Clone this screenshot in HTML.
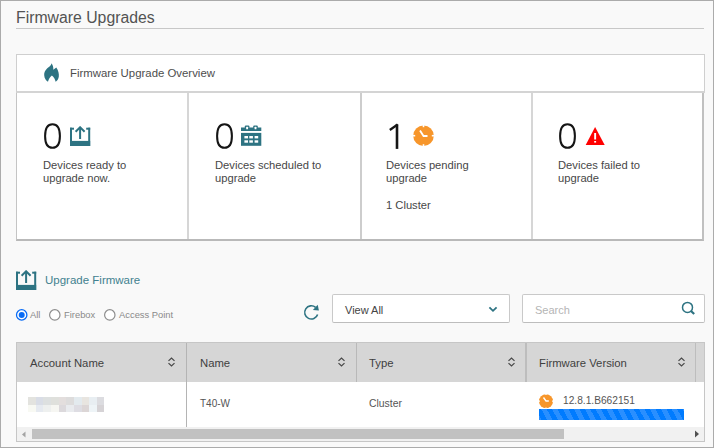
<!DOCTYPE html>
<html><head><meta charset="utf-8">
<style>
*{box-sizing:border-box;margin:0;padding:0}
html,body{width:714px;height:448px;overflow:hidden;background:#fff}
body{font-family:"Liberation Sans",sans-serif;position:relative}
.abs{position:absolute}
#frame{left:0;top:0;width:714px;height:448px;border:1px solid #ababab;background:#f9f9f9}
.t{position:absolute;white-space:nowrap;line-height:1}
#title{left:16px;top:10px;font-size:15.8px;color:#535353}
#tline{left:16px;top:28px;width:688px;height:1px;background:#c8c8c8}
#ovh{left:16px;top:54px;width:689px;height:39px;background:#fff;border:1px solid #cfcfcf;border-bottom:2px solid #d4d4d4}
#cards{left:16px;top:93px;width:688px;height:148px;background:#fff;border:1px solid #c4c4c4;border-top:none;border-bottom:2px solid #b9b9b9;border-right:2px solid #c0c0c0}
.vd{position:absolute;top:93px;width:2px;height:146px;background:#d6d6d6}
.num{position:absolute;font-size:35px;color:#1e1e1e;line-height:1;top:120px;font-weight:normal;transform:scaleX(0.85);transform-origin:0 0}
.desc{position:absolute;font-size:11.2px;color:#474747;line-height:13px;white-space:nowrap}
.teal{fill:#2d7382}
.th{top:358px;font-size:11.3px;color:#3f3f3f}
.td{font-size:10px;color:#555}
.sort polyline{fill:none;stroke:#484848;stroke-width:1.25}
#blur i{display:block}
</style></head><body>
<div id="frame" class="abs"></div>
<div id="title" class="t">Firmware Upgrades</div>
<div id="tline" class="abs"></div>

<div id="ovh" class="abs"></div>
<svg class="abs" style="left:44px;top:63px" width="16" height="20" viewBox="0 0 16 20">
 <path class="teal" d="M7.4,0.3 C8.6,1.8 9.6,3.8 9.3,6.8 L12.3,4.4 C14.4,7.4 15.2,10.8 14.8,13.8 C14.4,16.4 13,18.2 11.6,18.8 C11.2,16.2 9.8,13.6 7.9,12.4 C6,13.6 4.5,16.2 4,18.8 C2,17.8 0.4,15.4 0.2,12.2 C0,8.4 2.6,5.6 5.2,3.8 C6.6,2.8 7.4,1.6 7.4,0.3 Z"/>
</svg>
<div class="t" style="left:70px;top:68px;font-size:11.4px;color:#4d4d4d">Firmware Upgrade Overview</div>

<div id="cards" class="abs"></div>
<div class="vd" style="left:187px"></div>
<div class="vd" style="left:360px;background:#cdcdcd"></div>
<div class="vd" style="left:531px"></div>

<!-- card 1 -->
<svg class="abs" style="left:44px;top:123px" width="18" height="27" viewBox="0 0 18 27"><path d="M8.5,1.15 C14.1,1.15 15.9,6.2 15.9,12.95 C15.9,19.7 14.1,24.8 8.5,24.8 C2.9,24.8 1.1,19.7 1.1,12.95 C1.1,6.2 2.9,1.15 8.5,1.15 Z" fill="none" stroke="#151515" stroke-width="2.05"/></svg>
<svg class="abs" style="left:70px;top:125.6px" width="22" height="21" viewBox="0 0 22 21">
 <g class="teal">
  <rect x="0" y="1.7" width="2" height="18.3"/>
  <rect x="18.2" y="1.7" width="2" height="18.3"/>
  <rect x="0" y="1.7" width="4" height="2"/>
  <rect x="16.2" y="1.7" width="4" height="2"/>
  <rect x="0" y="14.9" width="20.2" height="5.1"/>
  <rect x="9.1" y="1.5" width="2" height="11.5"/>
 </g>
 <polyline points="5.6,5.8 10.1,1.3 14.6,5.8" fill="none" stroke="#2d7382" stroke-width="2"/>
</svg>
<div class="desc" style="left:43px;top:159px">Devices ready to<br>upgrade now.</div>

<!-- card 2 -->
<svg class="abs" style="left:216px;top:123px" width="18" height="27" viewBox="0 0 18 27"><path d="M8.5,1.15 C14.1,1.15 15.9,6.2 15.9,12.95 C15.9,19.7 14.1,24.8 8.5,24.8 C2.9,24.8 1.1,19.7 1.1,12.95 C1.1,6.2 2.9,1.15 8.5,1.15 Z" fill="none" stroke="#151515" stroke-width="2.05"/></svg>
<svg class="abs" style="left:241px;top:125px" width="21" height="21" viewBox="0 0 21 21">
 <g class="teal">
  <rect x="0" y="2.5" width="20.3" height="3.5"/>
  <rect x="3.8" y="0.6" width="4.6" height="3.2" rx="1"/>
  <rect x="12.2" y="0.6" width="4.6" height="3.2" rx="1"/>
  <rect x="0" y="7.9" width="20.3" height="12.9"/>
 </g>
 <g fill="#fff">
  <rect x="5.15" y="1.8" width="1.9" height="2.5" rx="0.5"/>
  <rect x="13.55" y="1.8" width="1.9" height="2.5" rx="0.5"/>
  <rect x="3.4" y="11" width="3.6" height="2.4"/>
  <rect x="8.3" y="11" width="3.6" height="2.4"/>
  <rect x="13.6" y="11" width="3.6" height="2.4"/>
  <rect x="3.4" y="15.3" width="3.6" height="2.4"/>
  <rect x="8.3" y="15.3" width="3.6" height="2.4"/>
  <rect x="13.6" y="15.3" width="3.6" height="2.4"/>
 </g>
</svg>
<div class="desc" style="left:215px;top:159px">Devices scheduled to<br>upgrade</div>

<!-- card 3 -->
<svg class="abs" style="left:388px;top:123px" width="12" height="27" viewBox="0 0 12 27"><path d="M9,1.3 L9,25.9" fill="none" stroke="#151515" stroke-width="2.6"/><path d="M9.6,1.5 L1.8,7" fill="none" stroke="#151515" stroke-width="2.2"/></svg>
<svg class="abs" style="left:413px;top:125px" width="22" height="22" viewBox="0 0 22 22">
 <circle cx="10.5" cy="10.7" r="10.3" fill="#f7962b"/>
 <g stroke="#fff" stroke-width="1.6">
  <line x1="10.5" y1="0" x2="10.5" y2="2.2"/>
  <line x1="10.5" y1="19.2" x2="10.5" y2="21.5"/>
  <line x1="0" y1="10.7" x2="2.2" y2="10.7"/>
  <line x1="18.8" y1="10.7" x2="21" y2="10.7"/>
 </g>
 <polyline points="7,5.5 10.5,11 14.5,11" fill="none" stroke="#fff" stroke-width="1.8"/>
</svg>
<div class="desc" style="left:386px;top:159px">Devices pending<br>upgrade</div>
<div class="desc" style="left:386px;top:199px">1 Cluster</div>

<!-- card 4 -->
<svg class="abs" style="left:559px;top:123px" width="18" height="27" viewBox="0 0 18 27"><path d="M8.5,1.15 C14.1,1.15 15.9,6.2 15.9,12.95 C15.9,19.7 14.1,24.8 8.5,24.8 C2.9,24.8 1.1,19.7 1.1,12.95 C1.1,6.2 2.9,1.15 8.5,1.15 Z" fill="none" stroke="#151515" stroke-width="2.05"/></svg>
<svg class="abs" style="left:585px;top:126px" width="21" height="20" viewBox="0 0 21 20">
 <polygon points="10.1,1 19.7,19 0.7,19" fill="#ff0000"/>
 <rect x="9.2" y="7" width="1.9" height="6.5" fill="#fff"/>
 <rect x="9.2" y="15" width="1.9" height="1.6" fill="#fff"/>
</svg>
<div class="desc" style="left:558px;top:159px">Devices failed to<br>upgrade</div>

<!-- upgrade firmware -->
<svg class="abs" style="left:16px;top:270px" width="22" height="21" viewBox="0 0 22 21">
 <g class="teal">
  <rect x="0" y="1.7" width="2" height="18.3"/>
  <rect x="18.2" y="1.7" width="2" height="18.3"/>
  <rect x="0" y="1.7" width="4" height="2"/>
  <rect x="16.2" y="1.7" width="4" height="2"/>
  <rect x="0" y="14.9" width="20.2" height="5.1"/>
  <rect x="9.1" y="1.5" width="2" height="11.5"/>
 </g>
 <polyline points="5.6,5.8 10.1,1.3 14.6,5.8" fill="none" stroke="#2d7382" stroke-width="2"/>
</svg>
<div class="t" style="left:45px;top:275px;font-size:11.5px;color:#42818f">Upgrade Firmware</div>

<!-- radios -->
<svg class="abs" style="left:15px;top:308px" width="14" height="14" viewBox="0 0 14 14">
 <circle cx="6.7" cy="6.9" r="5.2" fill="#fff" stroke="#0a6cf5" stroke-width="1.3"/>
 <circle cx="6.7" cy="6.9" r="3" fill="#0a6cf5"/>
</svg>
<div class="t" style="left:30px;top:310px;font-size:9.4px;color:#8a8a8a">All</div>
<svg class="abs" style="left:48px;top:308px" width="14" height="14" viewBox="0 0 14 14">
 <circle cx="6.8" cy="6.9" r="5.2" fill="#fff" stroke="#8d8d8d" stroke-width="1.2"/>
</svg>
<div class="t" style="left:64px;top:310px;font-size:9.4px;color:#8a8a8a">Firebox</div>
<svg class="abs" style="left:103px;top:308px" width="14" height="14" viewBox="0 0 14 14">
 <circle cx="6.8" cy="6.9" r="5.2" fill="#fff" stroke="#8d8d8d" stroke-width="1.2"/>
</svg>
<div class="t" style="left:119px;top:310px;font-size:9.4px;color:#8a8a8a">Access Point</div>

<!-- refresh -->
<svg class="abs" style="left:303px;top:304px" width="17" height="17" viewBox="0 0 17 17">
 <path d="M14.6,10.4 A6.6,6.6 0 1 1 12.6,3.4" fill="none" stroke="#2d7382" stroke-width="1.6"/>
 <polygon points="14.7,0.7 15.9,6.4 9.9,5.9" fill="#2d7382"/>
</svg>
<!-- select -->
<div class="abs" style="left:332px;top:294px;width:178px;height:29px;background:#fff;border:1px solid #c9c9c9;border-radius:2px;border-bottom-color:#bdbdbd"></div>
<div class="t" style="left:345px;top:305px;font-size:11px;color:#444">View All</div>
<svg class="abs" style="left:488px;top:306px" width="11" height="7" viewBox="0 0 11 7">
 <polyline points="1.4,1.3 5,4.8 8.6,1.3" fill="none" stroke="#2d7382" stroke-width="1.8"/>
</svg>

<!-- search -->
<div class="abs" style="left:522px;top:294px;width:183px;height:29px;background:#fff;border:1px solid #c9c9c9;border-radius:2px;border-bottom-color:#bdbdbd"></div>
<div class="t" style="left:535px;top:305px;font-size:11px;color:#b5b5b5">Search</div>
<svg class="abs" style="left:680px;top:300px" width="16" height="16" viewBox="0 0 16 16">
 <circle cx="7.5" cy="7.4" r="5" fill="none" stroke="#2d7382" stroke-width="1.5"/>
 <line x1="11" y1="11" x2="14.2" y2="14" stroke="#2d7382" stroke-width="2.2"/>
</svg>

<!-- table -->
<div class="abs" style="left:16px;top:342px;width:689px;height:100px;background:#fff;border:1px solid #c6c6c6"></div>
<div class="abs" style="left:17px;top:343px;width:687px;height:39px;background:#d6d6d6"></div>

<!-- header cells -->
<div class="abs" style="left:186px;top:343px;width:1px;height:84px;background:#b4b4b4"></div>
<div class="abs" style="left:356px;top:343px;width:1px;height:39px;background:#b9b9b9"></div>
<div class="abs" style="left:525px;top:343px;width:2px;height:39px;background:#bdbdbd"></div>
<div class="abs" style="left:695px;top:343px;width:1px;height:39px;background:#bdbdbd"></div>
<div class="th t" style="left:30px">Account Name</div>
<div class="th t" style="left:200px">Name</div>
<div class="th t" style="left:369px">Type</div>
<div class="th t" style="left:539px">Firmware Version</div>
<svg class="abs sort" style="left:167px;top:357px" width="9" height="11" viewBox="0 0 9 11"><polyline points="1.5,3.9 4.5,1 7.5,3.9"/><polyline points="1.5,6.1 4.5,9 7.5,6.1"/></svg>
<svg class="abs sort" style="left:337px;top:357px" width="9" height="11" viewBox="0 0 9 11"><polyline points="1.5,3.9 4.5,1 7.5,3.9"/><polyline points="1.5,6.1 4.5,9 7.5,6.1"/></svg>
<svg class="abs sort" style="left:507px;top:357px" width="9" height="11" viewBox="0 0 9 11"><polyline points="1.5,3.9 4.5,1 7.5,3.9"/><polyline points="1.5,6.1 4.5,9 7.5,6.1"/></svg>
<svg class="abs sort" style="left:677px;top:357px" width="9" height="11" viewBox="0 0 9 11"><polyline points="1.5,3.9 4.5,1 7.5,3.9"/><polyline points="1.5,6.1 4.5,9 7.5,6.1"/></svg>
<!-- body -->
<div class="td t" style="left:200px;top:399px">T40-W</div>
<div class="td t" style="left:369px;top:399px;font-size:10.4px">Cluster</div>
<svg class="abs" style="left:538px;top:393px" width="16" height="16" viewBox="0 0 16 16">
 <circle cx="8" cy="8.2" r="7" fill="#f7962b"/>
 <g stroke="#fff" stroke-width="1.3">
  <line x1="8" y1="0.5" x2="8" y2="2"/>
  <line x1="8" y1="14.5" x2="8" y2="16"/>
  <line x1="0.5" y1="8.2" x2="2" y2="8.2"/>
  <line x1="14" y1="8.2" x2="16" y2="8.2"/>
 </g>
 <polyline points="5.5,4.5 8,8 10.8,8" fill="none" stroke="#fff" stroke-width="1.3"/>
</svg>
<div class="td t" style="left:563px;top:396px;font-size:10.2px">12.8.1.B662151</div>
<div class="abs" style="left:539px;top:409px;width:144.5px;height:11px;background-color:#007bff;background-image:repeating-linear-gradient(62deg,#2a8fff 0,#2a8fff 2.33px,#007bff 2.33px,#007bff 7.13px,#2a8fff 7.13px,#2a8fff 9.6px)"></div>
<!-- blurred name -->
<div id="blur" class="abs" style="left:28px;top:397px;width:76px;height:15px;display:grid;grid-template-columns:8px 7px 8px 8px 7px 8px 8px 7px 8px 7px;grid-template-rows:8px 7px">
<i style="background:#e3e3df"></i><i style="background:#d9dde6"></i><i style="background:#dde0e0"></i><i style="background:#dfe0dc"></i><i style="background:#e3dedd"></i><i style="background:#dddcdc"></i><i style="background:#e3eaee"></i><i style="background:#e8e5e0"></i><i style="background:#e8eef2"></i><i style="background:#dcdce0"></i>
<i style="background:#f8f9f3"></i><i style="background:#e6eaf0"></i><i style="background:#eef0ef"></i><i style="background:#f6f6f2"></i><i style="background:#dcd9dc"></i><i style="background:#e9ebee"></i><i style="background:#dedde3"></i><i style="background:#dcd6d6"></i><i style="background:#eef4f7"></i><i style="background:#d6d3d6"></i>
</div>
<!-- scrollbar -->
<div class="abs" style="left:17px;top:427px;width:687px;height:14px;background:#f1f1f1"></div>
<div class="abs" style="left:32px;top:429px;width:532px;height:10px;background:#c1c1c1"></div>
<svg class="abs" style="left:21px;top:430.5px" width="6" height="7" viewBox="0 0 6 7"><polygon points="4.5,0.5 4.5,6.5 1,3.5" fill="#a3a3a3"/></svg>
<svg class="abs" style="left:694px;top:430px" width="6" height="8" viewBox="0 0 6 8"><polygon points="1,0.5 1,7.5 5,4" fill="#505050"/></svg>
</body></html>
